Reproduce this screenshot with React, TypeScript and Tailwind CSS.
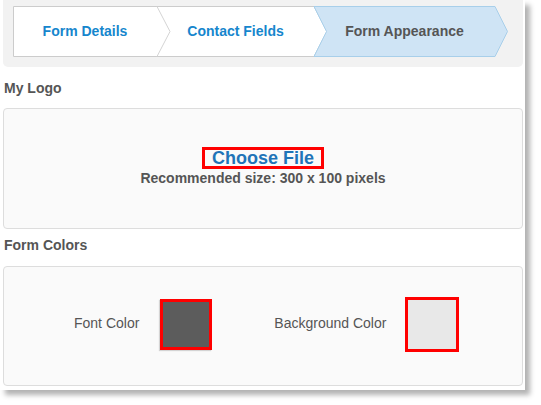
import React from "react";

const tabs = [
  { label: "Form Details", width: "w-[144px]", active: false },
  { label: "Contact Fields", width: "w-[157px]", active: false },
  { label: "Form Appearance", width: "w-[181px]", active: true },
];

function StepBar() {
  return (
    <div className="relative flex h-[51px] w-[495px]">
      {/* chevron outlines */}
      <svg className="absolute inset-0" width="495" height="51" viewBox="0 0 495 51">
        <path d="M0.5 0.5 H301 L314 25.5 L301 50.5 H0.5 Z" fill="#ffffff" stroke="#cccccc" />
        <path d="M144 0.5 L157 25.5 L144 50.5" fill="none" stroke="#d4d4d4" />
        <path d="M301 0.5 H482 L494.5 25.5 L482 50.5 H301 L313.5 25.5 Z" fill="#cfe4f5" stroke="#a8cfea" />
      </svg>
      {tabs.map((t) => (
        <div
          key={t.label}
          className={`relative flex items-center justify-center ${t.width} text-[14px] font-bold ${
            t.active ? "text-[#555555]" : "text-[#1686cd]"
          }`}
        >
          {t.label}
        </div>
      ))}
    </div>
  );
}

export default function App() {
  return (
    <div className="min-h-screen bg-white font-['Liberation_Sans',Arial,sans-serif]">
      <div className="w-[525px] h-[390px] bg-white pl-[3px] pr-[2px] shadow-[5px_5px_5px_rgba(0,0,0,0.3)]">
        {/* wizard header */}
        <div className="h-[67px] bg-[#f2f2f2] rounded-b-[5px] pt-[6px] pl-[10px]">
          <StepBar />
        </div>

        <div className="mt-[13px] pl-[1px] text-[14px] leading-[16px] font-bold text-[#555555]">My Logo</div>
        <div className="mt-[12px] h-[121px] rounded-[4px] border border-[#dddddd] bg-[#fafafa] flex flex-col items-center pt-[38px]">
          <div className="h-[22px] border-[3px] border-[#ff0000] px-[7px] text-[18px] leading-[16px] font-bold text-[#1f74b8]">
            Choose File
          </div>
          <div className="mt-[1px] text-[14px] leading-[16px] font-bold text-[#555555]">
            Recommended size: 300 x 100 pixels
          </div>
        </div>

        <div className="mt-[8px] pl-[1px] text-[14px] leading-[16px] font-bold text-[#555555]">Form Colors</div>
        <div className="mt-[13px] h-[120px] rounded-[4px] border border-[#dddddd] bg-[#fafafa] pt-[30px] pl-[70px]">
          <div className="flex items-center text-[14px] text-[#555555]">
            <span className="-mt-[2px]">Font Color</span>
            <div className="ml-[21px] w-[52px] h-[51px] border-[3px] border-[#ff0000] bg-[#5c5c5c] shadow-[-1px_1px_1px_rgba(0,0,0,0.15)]" />
            <span className="ml-[62px] -mt-[2px]">Background Color</span>
            <div className="ml-[19px] w-[54px] h-[55px] border-[3px] border-[#ff0000] bg-[#e8e8e8]" />
          </div>
        </div>
      </div>
    </div>
  );
}
